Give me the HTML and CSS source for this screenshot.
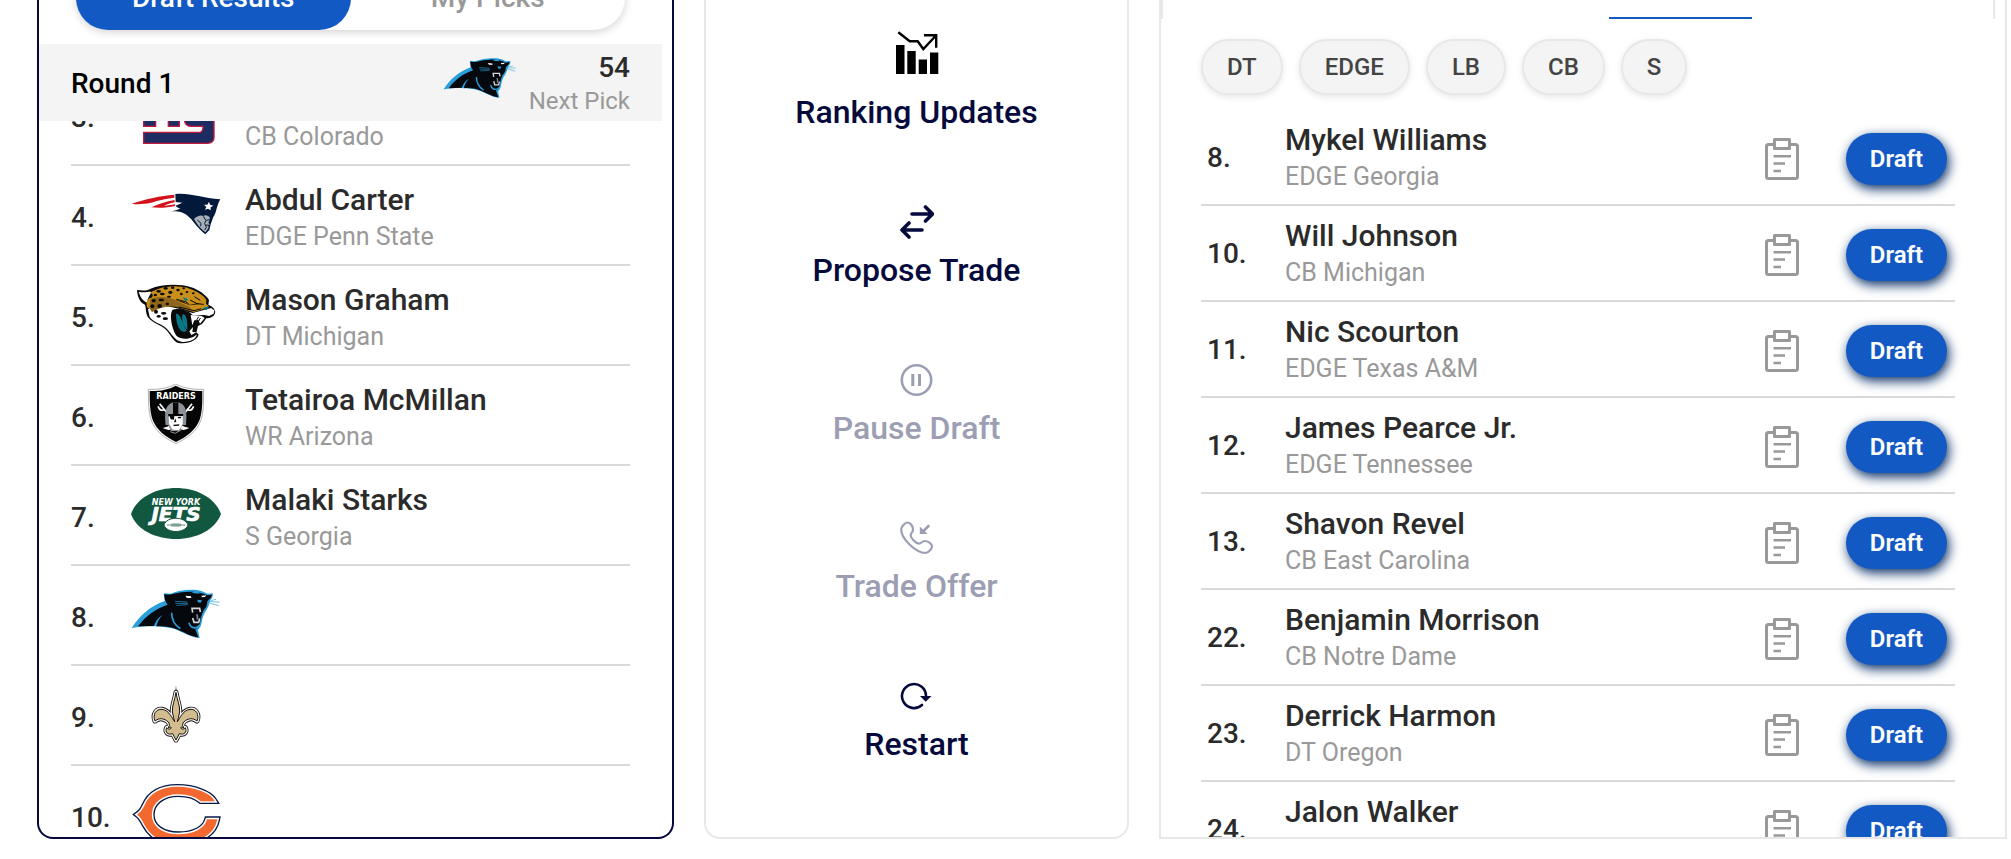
FILE: index.html
```
<!DOCTYPE html>
<html lang="en">
<head>
    <meta charset="UTF-8">
    <meta name="viewport" content="width=device-width, initial-scale=1.0">
    <title>Mock Draft</title>
    <link rel="stylesheet" href="styles.css">
</head>
<body>
    <!-- logos and icons -->
    <svg class="sprite" aria-hidden="true">
        <symbol id="panthers" viewBox="33 42 270 180">
            <path fill="#2a9fdb" d="M35 174C60 135 92 108 134 93L131 70L152 71C175 62 205 57 235 61C248 63 256 69 263 71L279 70C278 78 278 84 271 91C268 106 262 116 256 126C248 138 246 152 244 163C241 173 236 178 234 181L239 204C215 203 193 189 172 180C138 167 80 166 35 174Z"/>
            <path fill="#05080c" d="M54 169C75 140 105 117 143 104C134 94 133 82 133 72C150 78 168 66 205 65C230 64 250 70 262 76L276 74C275 83 266 88 262 94C262 106 258 114 250 122C243 138 242 150 240 160C236 170 230 176 226 178L235 202C214 200 195 188 174 179C150 169 129 168 109 169C113 152 120 143 128 134C111 145 106 156 102 168Z"/>
            <path fill="none" stroke="#2a9fdb" stroke-width="5" d="M155 128C155 148 162 164 181 176M207 158C211 176 228 177 237 167"/>
            <path fill="none" stroke="#2a9fdb" stroke-width="2" d="M165 94L202 96M166 100L204 100M169 106L203 104M270 95L299 96M271 100L296 107M272 92L288 88"/>
            <path fill="#2a9fdb" d="M232 89L246 91L242 98L234 97ZM214 66L232 65L240 71L222 70Z"/>
            <path fill="#fff" d="M196 77L213 79L214 84L201 84ZM244 77L259 76L255 81L246 82Z"/>
            <path fill="none" stroke="#d5d7d9" stroke-width="5" d="M218 128L216 115H239L241 126M218 144L222 157H236L239 145"/>
            <path fill="#7d8287" d="M228 134C233 129 236 136 235 148L229 149C230 143 230 139 228 134Z"/>
        </symbol>
        <symbol id="patriots" viewBox="33 12 270 180">
            <path fill="#d3121c" d="M35 71C80 56 120 48 163 44L163 53C133 57 116 61 90 69C74 72 54 74 35 71ZM94 82C115 73 138 64 164 60L164 67C150 70 142 73 132 78L165 73L165 78C142 83 119 85 94 82Z"/>
            <path fill="#03193b" d="M166 42C205 37 245 53 301 58C290 76 289 101 280 111L272 133L268 150L256 163C240 152 226 134 214 118C198 99 180 92 153 94C166 91 175 88 181 86C175 82 167 81 167 77L187 68L167 66Z"/>
            <path fill="#fff" d="M267 65L270 74L280 77L272 82L272 91L264 86L255 89L259 81L252 74L262 74Z"/>
            <path fill="#a8afb6" d="M222 117C230 107 244 104 250 108C256 103 264 107 269 111L269 120L265 128L269 133L265 137L266 142L262 149L256 157C244 148 231 134 222 117Z"/>
            <path fill="none" stroke="#03193b" stroke-width="3" d="M250 109L258 122L254 130L259 142L254 150M259 121L269 119M258 135L267 136M232 120L243 130L242 139"/>
        </symbol>
        <symbol id="jaguars" viewBox="33 312 270 180">
            <path fill="#0a0a0a" d="M51 330C66 332 80 333 90 327C125 311 180 311 211 321C237 329 258 345 267 360L265 374C282 382 289 391 284 402C279 412 270 414 259 415L246 432L234 438L229 458L236 463C234 480 205 494 175 489C160 484 151 463 138 449C123 435 98 429 86 414C76 401 79 386 75 374C61 369 52 351 51 330Z"/>
            <path fill="#fff" d="M56 335C72 340 88 334 94 336L83 358L82 368C68 363 60 350 56 335ZM84 388C96 374 125 374 153 381C176 385 199 394 218 399L260 388L273 384L283 391L281 401L267 408C249 402 231 408 219 406L211 399C198 390 171 384 158 389C146 404 157 451 171 469C184 481 218 478 230 463C231 477 208 487 187 486C164 484 154 459 139 445C124 431 99 427 89 411Z"/>
            <path fill="#c98f1c" d="M90 339C125 315 180 315 209 326C232 334 251 346 259 359L258 371L267 379L253 388L242 386C249 382 242 373 232 370L208 375L190 365L163 359C128 362 105 369 94 384L83 384C75 370 83 354 94 353C102 347 98 341 90 339Z"/>
            <path fill="#c98f1c" d="M160 358L210 376L246 371L258 380L245 389L222 396L200 390L150 374Z"/>
            <path fill="#8e651b" d="M91 357C116 348 145 350 163 359L210 382L218 395C182 378 137 371 96 397L88 384Z"/>
            <path fill="#087787" d="M168 401C182 400 185 425 200 452C187 464 168 444 168 401ZM188 403C198 400 203 420 202 449C187 434 184 415 188 403ZM187 352L204 357L198 365ZM247 385L267 378L260 391Z"/>
            <path fill="#fff" d="M212 405L245 408L254 414L240 431L235 420L223 421L217 436ZM208 454L219 441L217 456L229 457L214 465Z"/>
            <path fill="none" stroke="#0a0a0a" stroke-width="3" d="M169 358L197 365L208 374M210 360L231 371L251 373M223 350L241 361M176 381L222 392L244 386M236 410L230 420M241 414L231 433"/>
            <g fill="#0a0a0a">
                <ellipse cx="116" cy="334" rx="7" ry="4"/><ellipse cx="137" cy="325" rx="6" ry="4"/><ellipse cx="158" cy="323" rx="5" ry="4"/>
                <ellipse cx="127" cy="342" rx="7" ry="4"/><ellipse cx="151" cy="337" rx="6" ry="5"/><ellipse cx="174" cy="330" rx="5" ry="4"/>
                <ellipse cx="191" cy="325" rx="4" ry="3"/><ellipse cx="201" cy="336" rx="4" ry="3"/><ellipse cx="184" cy="342" rx="4" ry="4"/>
                <ellipse cx="220" cy="340" rx="4" ry="3"/><ellipse cx="106" cy="345" rx="5" ry="4"/><ellipse cx="147" cy="350" rx="6" ry="3"/>
                <ellipse cx="101" cy="362" rx="6" ry="5"/><ellipse cx="124" cy="360" rx="8" ry="4"/><ellipse cx="97" cy="379" rx="6" ry="6"/>
                <ellipse cx="119" cy="378" rx="7" ry="6"/><ellipse cx="142" cy="372" rx="5" ry="4"/><ellipse cx="108" cy="395" rx="6" ry="6"/>
                <ellipse cx="131" cy="400" rx="8" ry="4"/><ellipse cx="136" cy="416" rx="8" ry="4"/><ellipse cx="116" cy="409" rx="6" ry="4"/>
            </g>
        </symbol>
        <symbol id="raiders" viewBox="33 42 270 180">
            <path fill="#fff" stroke="#888" stroke-width="2" d="M85 58C113 59 145 55 167 42C190 55 223 59 251 58C250 88 252 122 243 150C231 185 200 205 168 221C136 205 107 187 94 151C84 122 86 91 85 58Z"/>
            <path fill="#050505" d="M89 63C116 64 146 59 167 47C190 59 220 64 247 63C247 92 248 122 239 149C227 180 199 201 168 216C137 201 110 180 98 150C89 123 89 92 89 63Z"/>
            <text class="raiders-text" x="168" y="87" text-anchor="middle">RAIDERS</text>
            <path fill="none" stroke="#fff" stroke-width="5" d="M119 101L144 132M216 101L192 132M114 109C119 122 127 124 134 116M221 109C216 122 208 124 201 116"/>
            <path fill="#fff" d="M128 174C140 172 147 168 153 163L159 174C150 183 142 180 128 174ZM208 174C196 172 187 168 181 163L176 174C186 183 196 180 208 174Z"/>
            <path fill="#8c9297" d="M137 165C134 131 133 99 167 96C202 98 201 131 198 165L187 165L179 184L153 183L145 165Z"/>
            <path fill="#050505" d="M159 97H175V132H159Z"/>
            <path fill="#fff" d="M146 135L188 133L188 162L177 180L158 179L147 161Z"/>
            <path fill="#050505" d="M144 132L190 132L189 138L145 139ZM149 139L163 139L162 149L152 148ZM173 141L184 140L183 145L174 145ZM166 145L169 156L162 157ZM160 164L178 163L177 167L161 168Z"/>
            <path fill="none" stroke="#8c9297" stroke-width="3" d="M151 185L166 190L188 177"/>
        </symbol>
        <symbol id="jets" viewBox="33 342 270 180">
            <path fill="#125740" d="M33 432C49 384 106 354 168 354C230 354 286 384 303 432C286 479 230 507 168 507C106 507 49 479 33 432Z"/>
            <text class="jets-city" x="168" y="404" text-anchor="middle">NEW YORK</text>
            <text class="jets-text" x="168" y="452" text-anchor="middle">JETS</text>
            <path fill="#fff" stroke="#125740" stroke-width="3" d="M132 465C140 438 195 438 204 465C195 491 140 491 132 465Z"/>
            <path fill="none" stroke="#125740" stroke-width="2" d="M141 465H195M156 460V470M162 459V471M168 459V471M174 459V471M180 460V470"/>
        </symbol>
        <symbol id="saints" viewBox="33 342 270 180">
            <path fill="none" stroke="#16120f" stroke-width="15" stroke-linejoin="round" d="M168 367C165 389 156 405 157 426C158 437 163 445 164 455C156 446 149 421 126 418C108 416 97 434 105 453C117 443 132 444 145 456C149 462 150 471 144 472C149 473 153 469 154 474C152 479 143 478 140 473C134 486 143 496 158 491L168 510L178 491C193 496 202 486 196 473C193 478 184 479 182 474C183 469 187 473 192 472C186 471 187 462 191 456C204 444 219 443 231 453C239 434 228 416 210 418C187 421 180 446 172 455C173 445 178 437 179 426C180 405 171 389 168 367Z"/>
            <path fill="#16120f" d="M166 368L168 346L170 368Z"/>
            <path fill="none" stroke="#fff" stroke-width="10" stroke-linejoin="round" d="M168 367C165 389 156 405 157 426C158 437 163 445 164 455C156 446 149 421 126 418C108 416 97 434 105 453C117 443 132 444 145 456C149 462 150 471 144 472C149 473 153 469 154 474C152 479 143 478 140 473C134 486 143 496 158 491L168 510L178 491C193 496 202 486 196 473C193 478 184 479 182 474C183 469 187 473 192 472C186 471 187 462 191 456C204 444 219 443 231 453C239 434 228 416 210 418C187 421 180 446 172 455C173 445 178 437 179 426C180 405 171 389 168 367Z"/>
            <path fill="#d3bc8d" stroke="#16120f" stroke-width="3" d="M168 367C165 389 156 405 157 426C158 437 163 445 164 455C156 446 149 421 126 418C108 416 97 434 105 453C117 443 132 444 145 456C149 462 150 471 144 472C149 473 153 469 154 474C152 479 143 478 140 473C134 486 143 496 158 491L168 510L178 491C193 496 202 486 196 473C193 478 184 479 182 474C183 469 187 473 192 472C186 471 187 462 191 456C204 444 219 443 231 453C239 434 228 416 210 418C187 421 180 446 172 455C173 445 178 437 179 426C180 405 171 389 168 367Z"/>
        </symbol>
        <symbol id="bears" viewBox="0 0 270 180">
            <path fill="none" stroke="#0b1a44" stroke-width="22" d="M22 92C34 84 38 74 42 66C58 28 94 11 140 11C190 11 235 30 247 49L210 49C192 33 168 28 142 28C95 28 60 54 60 92C60 130 95 153 142 153C190 153 222 135 230 108L256 108C248 148 205 175 140 175C95 175 62 158 42 120C36 108 32 100 22 92Z"/>
            <path fill="none" stroke="#fff" stroke-width="14" d="M22 92C34 84 38 74 42 66C58 28 94 11 140 11C190 11 235 30 247 49L210 49C192 33 168 28 142 28C95 28 60 54 60 92C60 130 95 153 142 153C190 153 222 135 230 108L256 108C248 148 205 175 140 175C95 175 62 158 42 120C36 108 32 100 22 92Z"/>
            <path fill="#f2682f" stroke="#f2682f" stroke-width="5" d="M22 92C34 84 38 74 42 66C58 28 94 11 140 11C190 11 235 30 247 49L210 49C192 33 168 28 142 28C95 28 60 54 60 92C60 130 95 153 142 153C190 153 222 135 230 108L256 108C248 148 205 175 140 175C95 175 62 158 42 120C36 108 32 100 22 92Z"/>
        </symbol>
        <symbol id="giants" viewBox="0 0 270 180">
            <path fill="#1d2c63" stroke="#c5193e" stroke-width="4" d="M38 20H135C142 20 145 24 145 30V127H112V52H74V127H38ZM160 20H192V88C192 97 210 97 210 88V20H249V160C249 172 240 178 229 178H38V145H206C213 145 216 140 216 127H182C166 127 160 117 160 104Z"/>
        </symbol>
        <symbol id="clipboard" viewBox="0 0 34 42">
            <path fill="none" stroke="#999" stroke-width="3" stroke-linejoin="round" d="M9 6.500H3.500Q1.500 6.500 1.500 8.500V38.500Q1.500 40.500 3.500 40.500H30.500Q32.500 40.500 32.500 38.500V8.500Q32.500 6.500 30.500 6.500H25M9.500 1.500H24.500V10.500H9.500Z"/>
            <path fill="none" stroke="#999" stroke-width="2.600" d="M8.500 18.200H26M8.500 25.500H20M8.500 33H16"/>
        </symbol>
    </svg>

    <main class="board">
        <section class="panel results">
            <div class="tabs">
                <button class="tab active">Draft Results</button>
                <button class="tab">My Picks</button>
            </div>
            <div class="round">
                <h2>Round 1</h2>
                <svg class="round-logo"><use href="#panthers"/></svg>
                <div class="next">
                    <strong>54</strong>
                    <span>Next Pick</span>
                </div>
            </div>
            <div class="pick-view">
                <ul class="pick-list">
                    <li class="pick">
                        <span class="num">3.</span>
                        <svg class="logo"><use href="#giants"/></svg>
                        <div class="player"><b></b><span>CB Colorado</span></div>
                    </li>
                    <li class="pick">
                        <span class="num">4.</span>
                        <svg class="logo"><use href="#patriots"/></svg>
                        <div class="player"><b>Abdul Carter</b><span>EDGE Penn State</span></div>
                    </li>
                    <li class="pick">
                        <span class="num">5.</span>
                        <svg class="logo"><use href="#jaguars"/></svg>
                        <div class="player"><b>Mason Graham</b><span>DT Michigan</span></div>
                    </li>
                    <li class="pick">
                        <span class="num">6.</span>
                        <svg class="logo"><use href="#raiders"/></svg>
                        <div class="player"><b>Tetairoa McMillan</b><span>WR Arizona</span></div>
                    </li>
                    <li class="pick">
                        <span class="num">7.</span>
                        <svg class="logo"><use href="#jets"/></svg>
                        <div class="player"><b>Malaki Starks</b><span>S Georgia</span></div>
                    </li>
                    <li class="pick">
                        <span class="num">8.</span>
                        <svg class="logo"><use href="#panthers"/></svg>
                    </li>
                    <li class="pick">
                        <span class="num">9.</span>
                        <svg class="logo"><use href="#saints"/></svg>
                    </li>
                    <li class="pick">
                        <span class="num">10.</span>
                        <svg class="logo"><use href="#bears"/></svg>
                    </li>
                </ul>
            </div>
        </section>

        <section class="panel actions">
            <button class="action">
                <svg class="icon-large" viewBox="0 0 44 44">
                    <path d="M1 14H9.500V43H1ZM12.300 20H20.700V43H12.300ZM23.700 28.500H32V43H23.700ZM35 21.500H43.300V43H35Z"/>
                    <path fill="none" stroke="#000" stroke-width="2.400" d="M3.300 1.300L14.700 10.300H22.700L28.300 18L41 4.500M29 4.300H41.200V16.700"/>
                </svg>
                Ranking Updates
            </button>
            <button class="action">
                <svg class="icon" viewBox="0 0 34 34"><path d="M12 9H32M25.500 2L32.500 9L25.500 16M22 25H2M9 18L2 25L9 32" stroke-width="3.600"/></svg>
                Propose Trade
            </button>
            <button class="action" disabled>
                <svg class="icon" viewBox="0 0 34 34"><circle cx="16.500" cy="17" r="14.700" stroke-width="2.600"/><path class="solid" d="M11.300 11H14.300V23H11.300ZM18 11H21V23H18Z"/></svg>
                Pause Draft
            </button>
            <button class="action" disabled>
                <svg class="icon" viewBox="0 0 34 34"><path d="M7.500 1.500C10.500 1.500 13 5 13 9C13 11 10.500 12 10.700 14.500C11 17.500 16 22.500 19 22.700C21 22.800 22 20 24.500 20C28 20 32 22.500 32 25.500C32 27.500 28.500 32 25.500 32C16 32 1.200 18 1.200 8.500C1.200 6 5 1.500 7.500 1.500Z" stroke-width="2.200"/><path d="M28.500 5L23 10.500" stroke-width="2.600"/><path class="solid" d="M19.800 5.500V13H27.500Z"/></svg>
                Trade Offer
            </button>
            <button class="action">
                <svg class="icon" viewBox="0 0 34 34"><path d="M26 17A12 12 0 1 0 22 26" stroke-width="2.600"/><path class="solid" d="M20 17H31.500L25.700 22.800Z"/></svg>
                Restart
            </button>
        </section>

        <section class="panel available">
            <div class="subnav"><span class="subnav-line"></span></div>
            <div class="filters">
                <button class="chip">DT</button>
                <button class="chip">EDGE</button>
                <button class="chip">LB</button>
                <button class="chip">CB</button>
                <button class="chip">S</button>
            </div>
            <ul class="prospects">
                <li class="prospect">
                    <span class="num">8.</span>
                    <div class="player"><b>Mykel Williams</b><span>EDGE Georgia</span></div>
                    <button class="notes" aria-label="Notes"><svg><use href="#clipboard"/></svg></button>
                    <button class="draft">Draft</button>
                </li>
                <li class="prospect">
                    <span class="num">10.</span>
                    <div class="player"><b>Will Johnson</b><span>CB Michigan</span></div>
                    <button class="notes" aria-label="Notes"><svg><use href="#clipboard"/></svg></button>
                    <button class="draft">Draft</button>
                </li>
                <li class="prospect">
                    <span class="num">11.</span>
                    <div class="player"><b>Nic Scourton</b><span>EDGE Texas A&amp;M</span></div>
                    <button class="notes" aria-label="Notes"><svg><use href="#clipboard"/></svg></button>
                    <button class="draft">Draft</button>
                </li>
                <li class="prospect">
                    <span class="num">12.</span>
                    <div class="player"><b>James Pearce Jr.</b><span>EDGE Tennessee</span></div>
                    <button class="notes" aria-label="Notes"><svg><use href="#clipboard"/></svg></button>
                    <button class="draft">Draft</button>
                </li>
                <li class="prospect">
                    <span class="num">13.</span>
                    <div class="player"><b>Shavon Revel</b><span>CB East Carolina</span></div>
                    <button class="notes" aria-label="Notes"><svg><use href="#clipboard"/></svg></button>
                    <button class="draft">Draft</button>
                </li>
                <li class="prospect">
                    <span class="num">22.</span>
                    <div class="player"><b>Benjamin Morrison</b><span>CB Notre Dame</span></div>
                    <button class="notes" aria-label="Notes"><svg><use href="#clipboard"/></svg></button>
                    <button class="draft">Draft</button>
                </li>
                <li class="prospect">
                    <span class="num">23.</span>
                    <div class="player"><b>Derrick Harmon</b><span>DT Oregon</span></div>
                    <button class="notes" aria-label="Notes"><svg><use href="#clipboard"/></svg></button>
                    <button class="draft">Draft</button>
                </li>
                <li class="prospect">
                    <span class="num">24.</span>
                    <div class="player"><b>Jalon Walker</b><span></span></div>
                    <button class="notes" aria-label="Notes"><svg><use href="#clipboard"/></svg></button>
                    <button class="draft">Draft</button>
                </li>
            </ul>
        </section>
    </main>
</body>
</html>
```
FILE: styles.css
```
* { box-sizing: border-box; }
body { margin: 0; font-family: Roboto, sans-serif; color: #2b2b2b; background-color: #fff; overflow: hidden; }
button { font-family: inherit; border: none; background: none; padding: 0; cursor: pointer; }
ul { list-style: none; margin: 0; padding: 0; }
.sprite { display: none; }

.board { display: grid; grid-template-columns: 637fr 425fr 848fr; gap: 30px; height: 100vh; padding: 0 4px 20px 37px; }
.panel { display: flex; flex-direction: column; min-height: 0; border: 2px solid #e8e8e8; border-top: none; border-radius: 0 0 16px 16px; overflow: hidden; }

/* draft results */
.results { border-color: #05073f; padding-right: 10px; }
.tabs { display: flex; flex-shrink: 0; margin: -34px 37px 14px; height: 64px; border-radius: 32px; box-shadow: 0 2px 8px rgba(0, 0, 0, 0.18); }
.tab { flex: 1; padding-bottom: 2px; border-radius: 32px; font-size: 28px; font-weight: 500; color: #999; }
.tab.active { background-color: #1259c3; color: #fff; }
.round { display: flex; align-items: center; flex-shrink: 0; height: 77px; padding: 0 32px; background-color: #f4f4f4; }
.round h2 { flex: 1; margin: 0; padding-top: 2px; font-size: 28px; font-weight: 500; color: #000; }
.round-logo { width: 74px; height: 50px; margin: 0 12px 10px 0; }
.next { display: flex; flex-direction: column; padding-top: 2px; text-align: right; }
.next strong { font-size: 28px; line-height: 34px; font-weight: 500; }
.next span { font-size: 24px; line-height: 32px; color: #999; }

.pick-view { flex: 1; min-height: 0; padding: 0 32px; overflow: hidden; }
.pick-list { margin-top: -55px; }
.pick { display: flex; align-items: center; height: 100px; padding: 16px 0 8px; border-bottom: 2px solid #d9d9d9; }
.pick .num { width: 60px; }
.num { margin-bottom: 2px; font-size: 28px; line-height: 36px; font-weight: 500; }
.logo { width: 90px; height: 60px; margin: 0 24px 10px 0; }
.player { display: flex; flex-direction: column; }
.player b { min-height: 36px; font-size: 30px; line-height: 36px; font-weight: 500; }
.player span { min-height: 38px; font-size: 25px; line-height: 38px; color: #999; }
.raiders-text { font-family: "DejaVu Sans", sans-serif; font-size: 24px; font-weight: 700; fill: #fff; }
.jets-city { font-family: "DejaVu Sans", sans-serif; font-size: 24px; font-weight: 700; font-style: italic; fill: #fff; }
.jets-text { font-family: "DejaVu Sans", sans-serif; font-size: 60px; font-weight: 700; font-style: italic; fill: #fff; stroke: #fff; stroke-width: 2px; }

/* actions */
.actions > :first-child { margin-top: -27px; }
.action { display: flex; flex-direction: column; align-items: center; justify-content: flex-end; flex-shrink: 0; gap: 12px; height: 158px; font-size: 32px; line-height: 38px; font-weight: 500; color: #05093b; }
.action:disabled { color: #9c9eb3; }
.icon { width: 34px; height: 34px; fill: none; stroke: currentColor; stroke-linecap: round; stroke-linejoin: round; }
.icon .solid { fill: currentColor; stroke: none; }
.icon-large { width: 44px; height: 44px; margin-bottom: 6px; }

/* available players */
.available { border-radius: 0; padding-right: 10px; }
.subnav { display: flex; justify-content: flex-end; align-items: flex-end; flex-shrink: 0; height: 19px; padding-right: 241px; border: 2px solid #e8e8e8; border-width: 0 2px; }
.subnav-line { width: 143px; height: 2px; background-color: #1259c3; }
.filters { display: flex; flex-shrink: 0; gap: 16px; margin: 20px 40px 15px; }
.chip { height: 56px; padding: 0 24px; border: 2px solid #e8e8e8; border-radius: 28px; background-color: #f4f4f4; box-shadow: 0 2px 6px rgba(0, 0, 0, 0.1); font-size: 24px; font-weight: 500; color: #444; }
.prospects { margin: 0 40px; }
.prospect { display: flex; align-items: center; height: 96px; padding: 12px 8px 8px 6px; border-bottom: 2px solid #d9d9d9; }
.prospect .num { width: 78px; }
.prospect .player { flex: 1; }
.notes { width: 34px; height: 42px; margin-right: 47px; }
.notes svg { display: block; width: 34px; height: 42px; }
.draft { width: 101px; height: 52px; border-radius: 26px; background-color: #1259c3; box-shadow: 2px 4px 12px #0b3067; font-size: 24px; font-weight: 600; color: #fff; }
```
